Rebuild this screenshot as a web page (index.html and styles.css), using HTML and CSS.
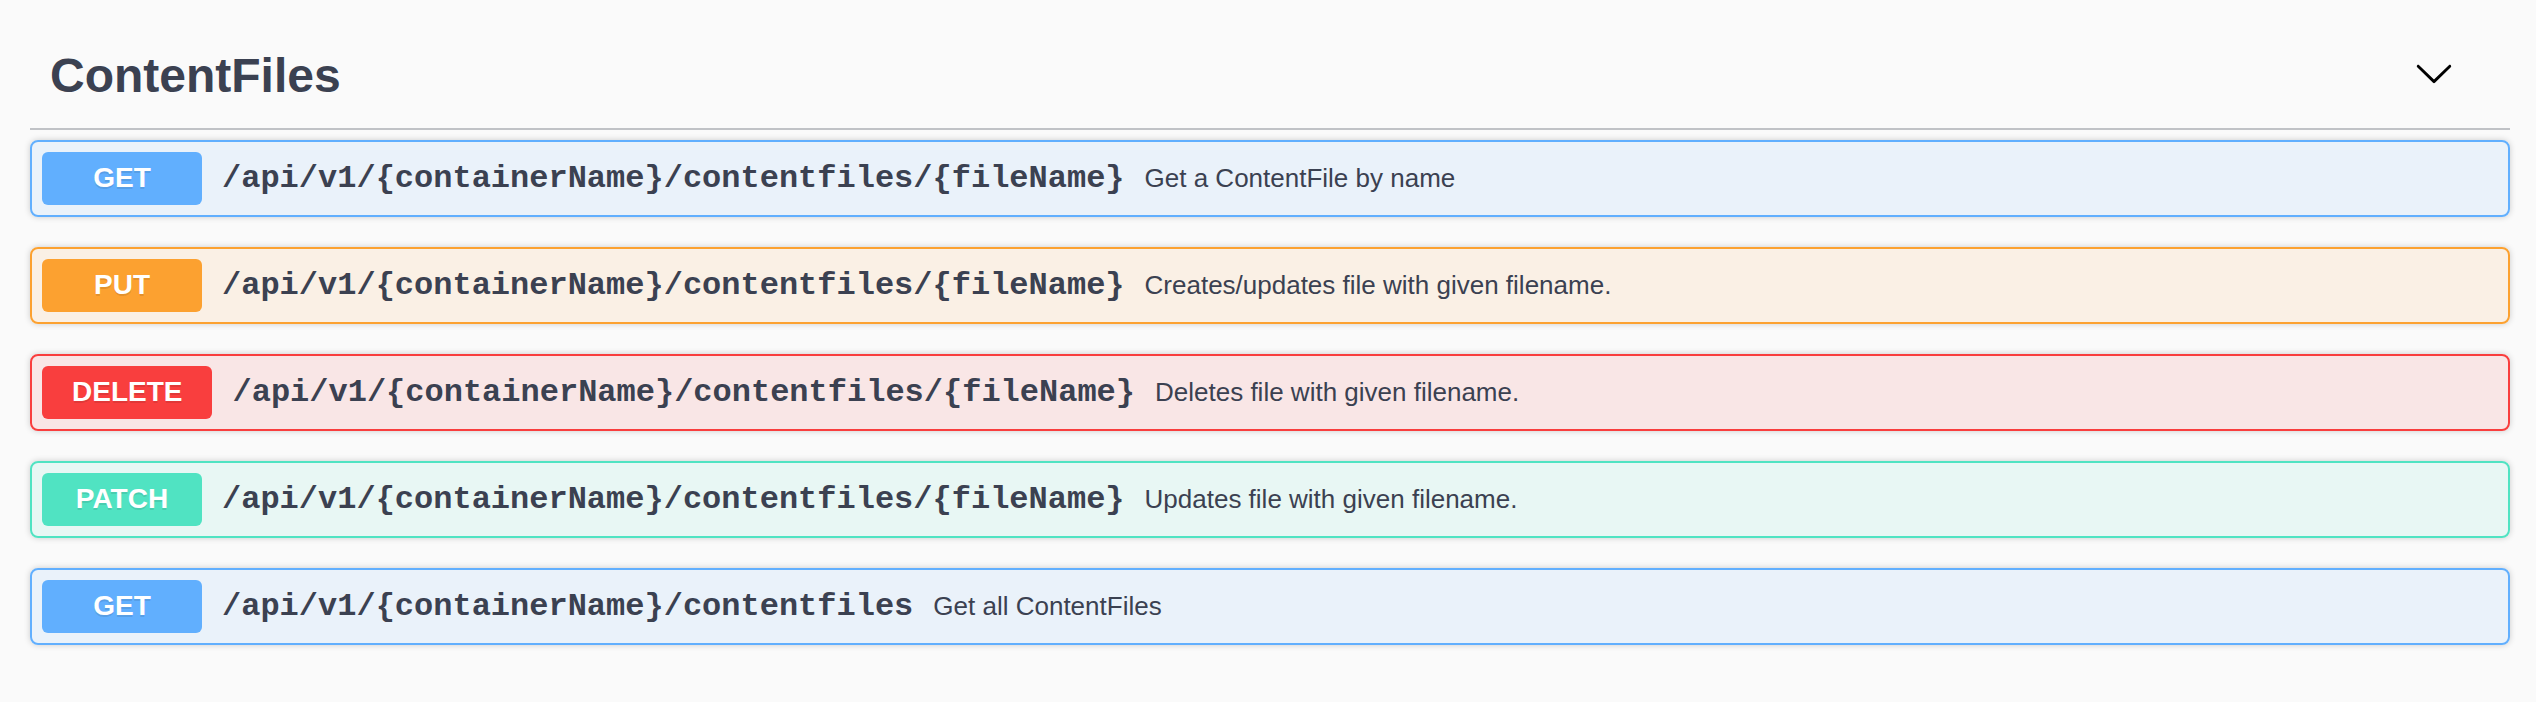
FILE: index.html
```html
<!DOCTYPE html>
<html>
<head>
<meta charset="utf-8">
<link rel="stylesheet" href="styles.css">
</head>
<body>
<div class="wrapper">
  <section class="tag-section">
    <h3 class="tag-title">
      <span class="tag-name">ContentFiles</span>
      <button class="expand" aria-label="collapse">
        <svg class="arrow" viewBox="0 0 20 20" width="40" height="40"><path d="M17.418 6.109c.272-.268.709-.268.979 0s.271.701 0 .969l-7.908 7.83c-.27.268-.707.268-.979 0l-7.908-7.83c-.27-.268-.27-.701 0-.969.271-.268.709-.268.979 0L10 13.25l7.418-7.141z"/></svg>
      </button>
    </h3>
    <div class="ops">
      <div class="opblock get">
        <span class="method">GET</span>
        <span class="path">/api/v1/{containerName}/contentfiles/{fileName}</span>
        <span class="desc">Get a ContentFile by name</span>
      </div>
      <div class="opblock put">
        <span class="method">PUT</span>
        <span class="path">/api/v1/{containerName}/contentfiles/{fileName}</span>
        <span class="desc">Creates/updates file with given filename.</span>
      </div>
      <div class="opblock delete">
        <span class="method">DELETE</span>
        <span class="path">/api/v1/{containerName}/contentfiles/{fileName}</span>
        <span class="desc">Deletes file with given filename.</span>
      </div>
      <div class="opblock patch">
        <span class="method">PATCH</span>
        <span class="path">/api/v1/{containerName}/contentfiles/{fileName}</span>
        <span class="desc">Updates file with given filename.</span>
      </div>
      <div class="opblock get">
        <span class="method">GET</span>
        <span class="path">/api/v1/{containerName}/contentfiles</span>
        <span class="desc">Get all ContentFiles</span>
      </div>
    </div>
  </section>
</div>
</body>
</html>
```

FILE: styles.css
```css
html, body {
  margin: 0;
  padding: 0;
  background: #fafafa;
}

body {
  font-family: "Liberation Sans", Arial, sans-serif;
  color: #3b4151;
}

.wrapper {
  padding: 32px 26px 0 30px;
}

.tag-title {
  margin: 0 0 10px 0;
  padding: 20px 40px 28px 20px;
  display: flex;
  align-items: center;
  border-bottom: 2px solid rgba(59, 65, 81, 0.3);
  font-size: 48px;
  line-height: 48px;
  font-weight: bold;
  color: #3b4151;
}

.tag-name {
  flex: 1 1 auto;
}

.expand {
  align-self: flex-start;
  margin: 1px 16px 0 0;
  padding: 0;
  border: none;
  background: none;
  width: 40px;
  height: 40px;
  display: flex;
}

.arrow {
  fill: #000;
}

.opblock {
  display: flex;
  align-items: center;
  padding: 10px;
  margin-bottom: 30px;
  border: 2px solid #61affe;
  border-radius: 8px;
  box-shadow: 0 0 6px rgba(0, 0, 0, 0.19);
}

.method {
  min-width: 160px;
  box-sizing: border-box;
  padding: 11px 30px 13px;
  font-size: 28px;
  line-height: 29px;
  font-weight: bold;
  text-align: center;
  color: #fff;
  border-radius: 6px;
  text-shadow: 0 2px 0 rgba(0, 0, 0, 0.1);
  font-family: "Liberation Sans", Arial, sans-serif;
}

.path {
  padding: 0 20px;
  font-family: "Liberation Mono", "Courier New", monospace;
  font-size: 32px;
  font-weight: bold;
  color: #3b4151;
  white-space: nowrap;
}

.desc {
  flex: 1 1 auto;
  font-size: 26px;
  color: #3b4151;
}

.get { border-color: #61affe; background: rgba(97, 175, 254, 0.1); }
.get .method { background: #61affe; }

.put { border-color: #fca130; background: rgba(252, 161, 48, 0.1); }
.put .method { background: #fca130; }

.delete { border-color: #f93e3e; background: rgba(249, 62, 62, 0.1); }
.delete .method { background: #f93e3e; }

.patch { border-color: #50e3c2; background: rgba(80, 227, 194, 0.1); }
.patch .method { background: #50e3c2; }
```
